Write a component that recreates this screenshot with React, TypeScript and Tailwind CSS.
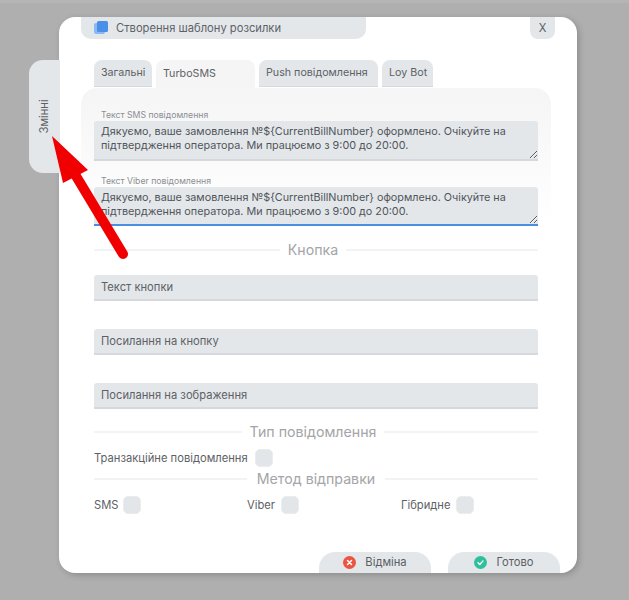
const SMS_TEXT =
  "Дякуємо, ваше замовлення №${CurrentBillNumber} оформлено. Очікуйте на\nпідтвердження оператора. Ми працюємо з 9:00 до 20:00.";

function Tab({ label, active, width }: { label: string; active?: boolean; width: string }) {
  return (
    <div
      className={`flex items-center rounded-t-[8px] pl-[7px] text-[10.7px] whitespace-nowrap ${width} ${
        active ? "h-[28px] bg-[#f5f5f5]" : "h-[27px] border-b border-[#d5d9dd] bg-[#e4e7ea]"
      }`}
    >
      {label}
    </div>
  );
}

function MessageField({ label, focused }: { label: string; focused?: boolean }) {
  return (
    <div className="flex flex-col">
      <label className="h-[15px] pl-[7px] text-[8.7px] leading-[19px] text-[#8b8f93]">{label}</label>
      <textarea
        className={`block w-full rounded-t-[3px] border-b-2 bg-[#e4e7ea] px-[7px] pt-[4px] pb-[2px] text-[10.8px] leading-[14px] text-[#50555a] outline-none ${
          focused ? "h-[39px] border-[#4a90e2]" : "h-[40px] border-[#d5d9dd]"
        }`}
        readOnly
        value={SMS_TEXT}
      />
    </div>
  );
}

function Divider({ label, lineLeft, lineRight }: { label: string; lineLeft: string; lineRight: string }) {
  return (
    <div className="flex h-[16px] items-center text-[14.2px] whitespace-nowrap text-[#a3a5a8]">
      <div className={`h-[2px] bg-[#f2f3f4] ${lineLeft}`} />
      <span className="flex-1 text-center">{label}</span>
      <div className={`h-[2px] bg-[#f2f3f4] ${lineRight}`} />
    </div>
  );
}

function TextInput({ placeholder }: { placeholder: string }) {
  return (
    <div className="flex h-[26px] items-center rounded-t-[3px] border-b-2 border-[#d5d9dd] bg-[#e4e7ea] pl-[7px] text-[11.2px] text-[#5d6166]">
      {placeholder}
    </div>
  );
}

function Checkbox() {
  return <div className="h-[18px] w-[18px] rounded-[5px] border border-[#eaecee] bg-[#e2e6e9]" />;
}

function ActionButton({ label, tone, width }: { label: string; tone: "cancel" | "done"; width: string }) {
  return (
    <button
      className={`flex h-[21px] items-center justify-center gap-[9px] rounded-t-[16px] bg-[#e4e7ea] text-[11.2px] text-[#5a5e63] ${width}`}
      type="button"
    >
      <svg width="13" height="13" viewBox="0 0 13 13">
        <circle cx="6.5" cy="6.5" r="6.5" fill={tone === "cancel" ? "#ea5440" : "#2fbf9b"} />
        {tone === "cancel" ? (
          <path d="M4.5 4.5l4 4M8.5 4.5l-4 4" stroke="#fff" strokeWidth="1.5" strokeLinecap="round" />
        ) : (
          <path d="M4 6.8l1.8 1.7 3.2-3.6" fill="none" stroke="#fff" strokeWidth="1.4" strokeLinecap="round" />
        )}
      </svg>
      {label}
    </button>
  );
}

export default function App() {
  return (
    <div className="relative h-[600px] w-[629px] overflow-hidden bg-[#afafaf] pt-[17px] pl-[59px] font-['Inter',sans-serif] text-[#5d6166]">
      <div className="absolute top-0 left-0 h-[3px] w-full bg-[#b5b5b5]" />

      {/* side tab sticks out to the left of the modal */}
      <div className="absolute top-[60px] left-[29px] flex h-[113px] w-[31px] items-center justify-center rounded-l-[14px] bg-[#e4e7ea]">
        <span className="-rotate-90 text-[11.2px] whitespace-nowrap">Змінні</span>
      </div>

      <div className="flex h-[556px] w-[518px] flex-col overflow-hidden rounded-[16px] bg-white px-[22px] shadow-[2px_2px_6px_rgba(0,0,0,0.2)]">
        <div className="flex h-[22px] justify-between">
          <div className="flex w-[285px] items-center gap-[8px] rounded-b-[10px] bg-[#e4e7ea] pl-[13px] text-[11.2px]">
            <svg width="14" height="14" viewBox="0 0 14 14">
              <rect x="0" y="2" width="11" height="11" rx="2" fill="#8ab8f2" />
              <rect x="3" y="0" width="11" height="11" rx="1.5" fill="#4a90e8" />
            </svg>
            Створення шаблону розсилки
          </div>
          <div className="flex w-[25px] items-center justify-center rounded-b-[8px] bg-[#e4e7ea] text-[11.2px]">
            X
          </div>
        </div>

        <div className="mt-[21px] flex gap-[4px] pl-[13px]">
          <Tab label="Загальні" width="w-[58px]" />
          <Tab label="TurboSMS" width="w-[99px]" active />
          <Tab label="Push повідомлення" width="w-[119px]" />
          <Tab label="Loy Bot" width="w-[51px]" />
        </div>

        <div className="flex w-[470px] flex-1 flex-col rounded-t-[16px] bg-gradient-to-b from-[#f5f5f5] to-white to-[28%] px-[13px] pt-[18px]">
          <div className="flex flex-col gap-[11px]">
            <MessageField label="Текст SMS повідомлення" />
            <MessageField label="Текст Viber повідомлення" focused />
          </div>

          <div className="mt-[16px]">
            <Divider label="Кнопка" lineLeft="w-[186px]" lineRight="w-[192px]" />
          </div>
          <div className="mt-[17px] flex flex-col gap-[28px]">
            <TextInput placeholder="Текст кнопки" />
            <TextInput placeholder="Посилання на кнопку" />
            <TextInput placeholder="Посилання на зображення" />
          </div>

          <div className="mt-[15px]">
            <Divider label="Тип повідомлення" lineLeft="w-[148px]" lineRight="w-[154px]" />
          </div>
          <div className="mt-[9px] flex items-center gap-[7px] text-[11.2px]">
            Транзакційне повідомлення
            <Checkbox />
          </div>
          <div className="mt-[4px]">
            <Divider label="Метод відправки" lineLeft="w-[153px]" lineRight="w-[153px]" />
          </div>
          <div className="mt-[9px] grid grid-cols-[153px_154px_1fr] text-[11.2px]">
            <div className="flex items-center gap-[5px]">
              SMS
              <Checkbox />
            </div>
            <div className="flex items-center gap-[6px]">
              Viber
              <Checkbox />
            </div>
            <div className="flex items-center gap-[6px]">
              Гібридне
              <Checkbox />
            </div>
          </div>

          <div className="mt-auto mr-[-22px] flex justify-end gap-[17px]">
            <ActionButton label="Відміна" tone="cancel" width="w-[112px]" />
            <ActionButton label="Готово" tone="done" width="w-[112px]" />
          </div>
        </div>
      </div>

      {/* annotation arrow drawn over the screenshot */}
      <svg className="absolute top-0 left-0" width="629" height="600" viewBox="0 0 629 600">
        <path d="M123 254 L76 176" stroke="#f00000" strokeWidth="10" strokeLinecap="round" />
        <path d="M52 136 L88 170 L63 183 Z" fill="#f00000" />
      </svg>
    </div>
  );
}
